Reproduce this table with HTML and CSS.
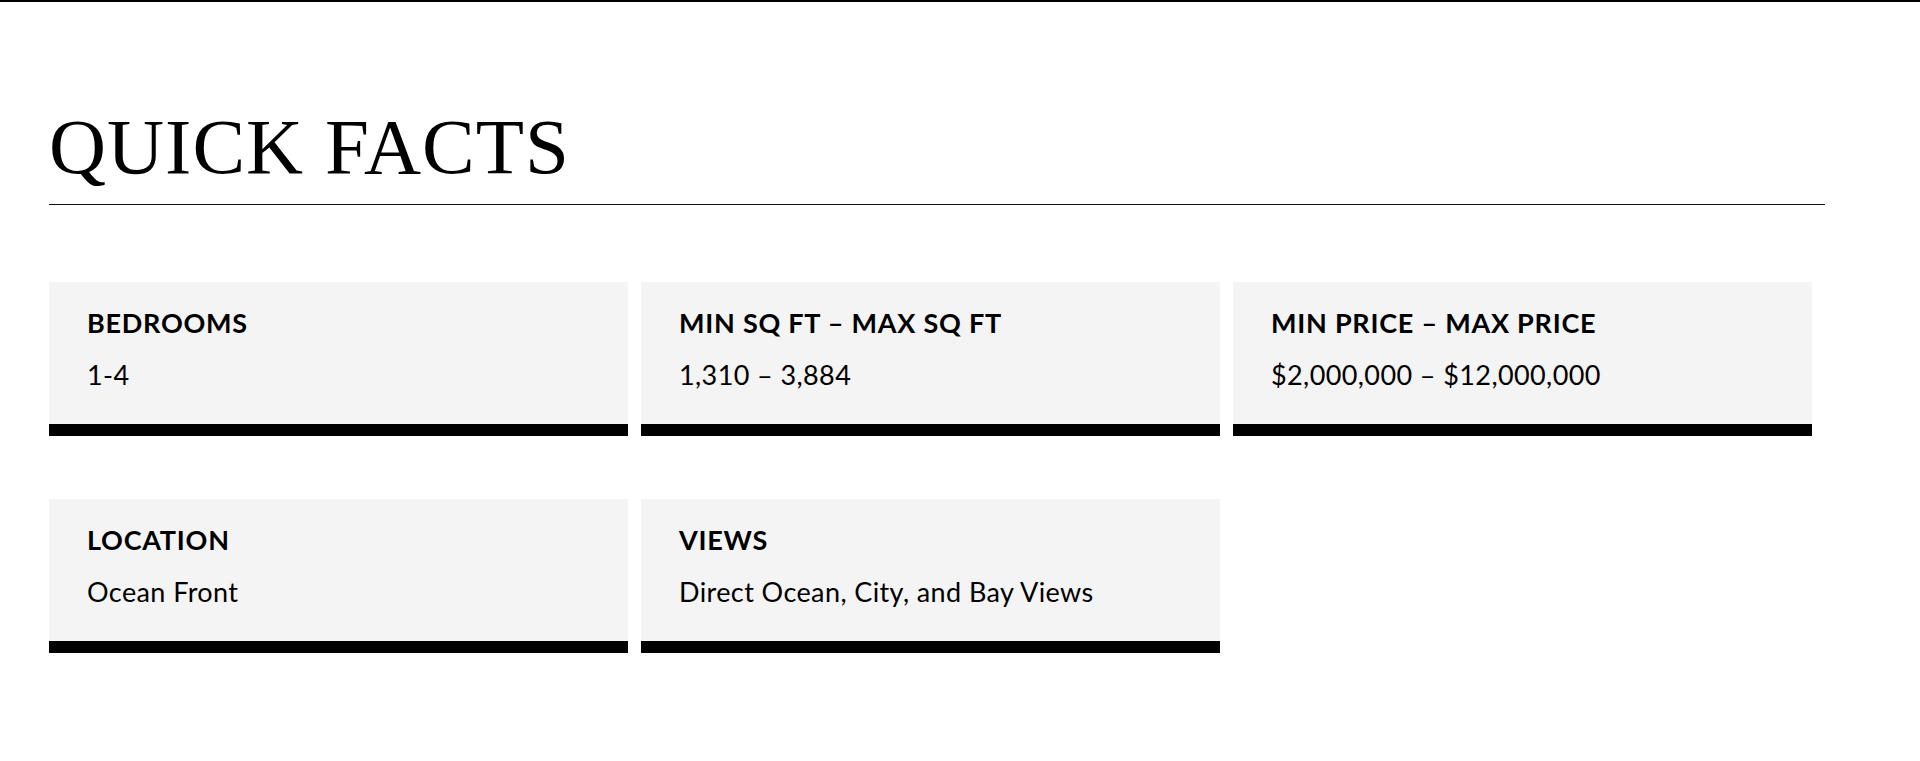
FILE: index.html
```html
<!DOCTYPE html>
<html lang="en">
<head>
<meta charset="utf-8">
<title>Quick Facts</title>
<link rel="stylesheet" href="styles.css">
</head>
<body>
<section class="facts">
  <h2 class="facts-title">QUICK FACTS</h2>
  <div class="facts-grid">
    <div class="fact">
      <div class="fact-body">
        <div class="fact-label">BEDROOMS</div>
        <div class="fact-value">1-4</div>
      </div>
    </div>
    <div class="fact">
      <div class="fact-body">
        <div class="fact-label">MIN SQ FT – MAX SQ FT</div>
        <div class="fact-value">1,310 – 3,884</div>
      </div>
    </div>
    <div class="fact">
      <div class="fact-body">
        <div class="fact-label">MIN PRICE – MAX PRICE</div>
        <div class="fact-value">$2,000,000 – $12,000,000</div>
      </div>
    </div>
    <div class="fact">
      <div class="fact-body">
        <div class="fact-label">LOCATION</div>
        <div class="fact-value">Ocean Front</div>
      </div>
    </div>
    <div class="fact">
      <div class="fact-body">
        <div class="fact-label">VIEWS</div>
        <div class="fact-value">Direct Ocean, City, and Bay Views</div>
      </div>
    </div>
  </div>
</section>
</body>
</html>
```

FILE: styles.css
```css
html, body {
  margin: 0;
  padding: 0;
  background: #fff;
}
body {
  border-top: 2px solid #000;
  color: #000;
  font-family: "Lato", "Liberation Sans", sans-serif;
}
.facts {
  padding: 0 95px 0 49px;
}
.facts-title {
  margin: 0;
  padding-top: 105px;
  padding-bottom: 17px;
  font-family: "Liberation Serif", "Times New Roman", serif;
  font-weight: 400;
  font-size: 79px;
  line-height: 80px;
  letter-spacing: 1px;
  border-bottom: 1px solid #111;
}
.facts-grid {
  display: grid;
  grid-template-columns: repeat(3, 579px);
  column-gap: 13px;
  row-gap: 63px;
  margin-top: 77px;
}
.fact {
  display: flex;
  flex-direction: column;
  border-bottom: 12px solid #000;
}
.fact-body {
  background: #f4f4f4;
  height: 142px;
  box-sizing: border-box;
  padding: 26px 38px 0;
}
.fact-label {
  font-weight: 700;
  font-size: 27px;
  line-height: 30px;
  letter-spacing: 0.75px;
}
.fact-value {
  margin-top: 22px;
  font-size: 27px;
  line-height: 30px;
  letter-spacing: 0.4px;
}
```
